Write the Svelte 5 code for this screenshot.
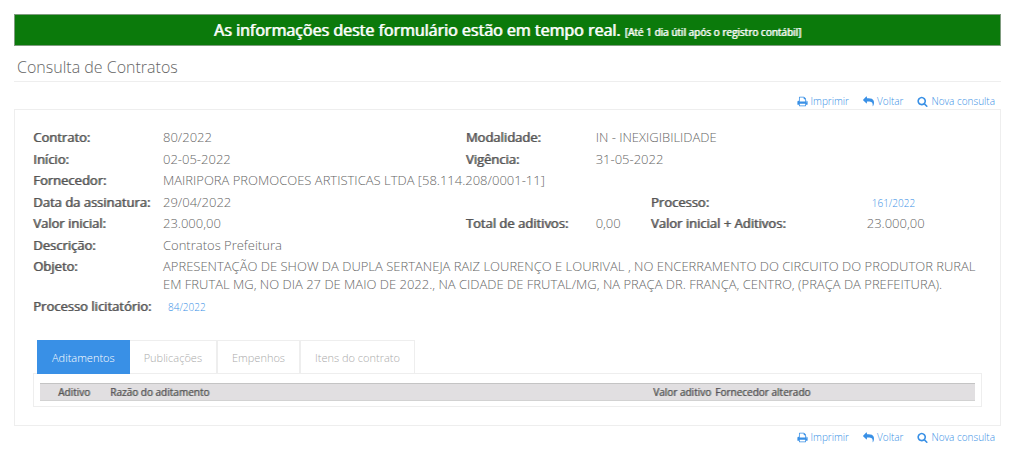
<script>
  const tabs = ['Aditamentos', 'Publicações', 'Empenhos', 'Itens do contrato'];
  let active = $state(0);

  const icons = {
    print: 'M448 1536h896v-256h-896v256zm0-640h896v-384h-160q-40 0-68-28t-28-68v-160h-640v640zm1152 64q0-26-19-45t-45-19-45 19-19 45 19 45 45 19 45-19 19-45zm128 0v416q0 13-9.5 22.5t-22.5 9.5h-224v160q0 40-28 68t-68 28h-960q-40 0-68-28t-28-68v-160h-224q-13 0-22.5-9.5t-9.5-22.5v-416q0-79 56.5-135.5t135.5-56.5h64v-544q0-40 28-68t68-28h672q40 0 88 20t76 48l152 152q28 28 48 76t20 88v256h64q79 0 135.5 56.5t56.5 135.5z',
    reply: 'M1792 1120q0 166-127 451-3 7-10.5 24t-13.5 30-13 22q-12 17-28 17-15 0-23.5-10t-8.5-25q0-9 2.5-26.5t2.5-23.5q5-68 5-123 0-101-17.5-181t-48.5-138.5-80-101-105.5-69.5-133-42.5-154-21.5-175.5-6h-224v256q0 26-19 45t-45 19-45-19l-512-512q-19-19-19-45t19-45l512-512q19-19 45-19t45 19 19 45v256h224q713 0 875 403 53 134 53 333z',
    search: 'M1216 832q0-185-131.5-316.5t-316.5-131.5-316.5 131.5-131.5 316.5 131.5 316.5 316.5 131.5 316.5-131.5 131.5-316.5zm512 832q0 52-38 90t-90 38q-54 0-90-38l-343-342q-179 124-399 124-143 0-273.5-55.5t-225-150-150-225-55.5-273.5 55.5-273.5 150-225 225-150 273.5-55.5 273.5 55.5 225 150 150 225 55.5 273.5q0 220-124 399l343 343q37 37 37 90z'
  };
  const actions = [
    { icon: icons.print, label: 'Imprimir' },
    { icon: icons.reply, label: 'Voltar' },
    { icon: icons.search, label: 'Nova consulta' }
  ];
</script>

{#snippet actionBar()}
  <nav class="actions">
    {#each actions as action}
      <a href="#top">
        <svg viewBox="0 0 1792 1792" aria-hidden="true"><path d={action.icon} /></svg>
        <span>{action.label}</span>
      </a>
    {/each}
  </nav>
{/snippet}

<main id="top">
  <p class="banner">As informações deste formulário estão em tempo real. <small>[Até 1 dia útil após o registro contábil]</small></p>
  <h1>Consulta de Contratos</h1>
  {@render actionBar()}

  <section class="panel">
    <dl>
      <div class="row">
        <dt>Contrato:</dt><dd>80/2022</dd>
        <dt>Modalidade:</dt><dd class="rest">IN - INEXIGIBILIDADE</dd>
      </div>
      <div class="row">
        <dt>Início:</dt><dd>02-05-2022</dd>
        <dt>Vigência:</dt><dd class="rest">31-05-2022</dd>
      </div>
      <div class="row">
        <dt>Fornecedor:</dt><dd class="wide">MAIRIPORA PROMOCOES ARTISTICAS LTDA [58.114.208/0001-11]</dd>
      </div>
      <div class="row">
        <dt>Data da assinatura:</dt><dd>29/04/2022</dd>
        <dt class="third">Processo:</dt><dd><a class="ref" href="#processo">161/2022</a></dd>
      </div>
      <div class="row">
        <dt>Valor inicial:</dt><dd>23.000,00</dd>
        <dt>Total de aditivos:</dt><dd>0,00</dd>
        <dt>Valor inicial + Aditivos:</dt><dd>23.000,00</dd>
      </div>
      <div class="row">
        <dt>Descrição:</dt><dd class="wide">Contratos Prefeitura</dd>
      </div>
      <div class="row">
        <dt>Objeto:</dt>
        <dd class="wide">APRESENTAÇÃO DE SHOW DA DUPLA SERTANEJA RAIZ LOURENÇO E LOURIVAL , NO ENCERRAMENTO DO CIRCUITO DO PRODUTOR RURAL EM FRUTAL MG, NO DIA 27 DE MAIO DE 2022., NA CIDADE DE FRUTAL/MG, NA PRAÇA DR. FRANÇA, CENTRO, (PRAÇA DA PREFEITURA).</dd>
      </div>
      <div class="row">
        <dt>Processo licitatório:</dt><dd class="wide"><a class="ref" href="#licitatorio">84/2022</a></dd>
      </div>
    </dl>

    <div class="tabs" role="tablist">
      {#each tabs as tab, i}
        <button type="button" role="tab" aria-selected={active === i} class:active={active === i} onclick={() => (active = i)}>{tab}</button>
      {/each}
    </div>
    <div class="tabpanel" role="tabpanel">
      <table>
        <thead>
          <tr>
            <th class="num">Aditivo</th>
            <th>Razão do aditamento</th>
            <th class="value">Valor aditivo</th>
            <th class="supplier">Fornecedor alterado</th>
          </tr>
        </thead>
      </table>
    </div>
  </section>
  {@render actionBar()}
</main>

<style>
  :global(body) {
    background: #fff;
  }
  main {
    padding: 14px 23px 0 14px;
    font: 300 13px/18px 'Open Sans', sans-serif;
    color: #666;
  }
  .banner {
    margin: 0;
    border: 1px solid #7f9c7f;
    background: #0b7a0b;
    color: #fff;
    text-align: center;
    font-size: 16px;
    font-weight: 400;
    line-height: 30px;
    text-shadow: 1px 0 0 rgb(255 255 255 / 85%);
  }
  .banner small {
    font-size: 10px;
    line-height: 16px;
  }
  h1 {
    margin: 8px 0 0;
    padding: 0 3px;
    border-bottom: 1px solid #eee;
    font-size: 16px;
    font-weight: 300;
    line-height: 27px;
    color: #666;
  }
  .actions {
    display: flex;
    justify-content: flex-end;
    gap: 14px;
    padding: 0 6px;
    font-size: 10px;
    line-height: 22px;
  }
  h1 + .actions {
    margin: 8px 0 -3px;
  }
  a {
    color: #3990e6;
    text-decoration: none;
  }
  .actions a {
    display: flex;
    align-items: center;
    gap: 3px;
  }
  svg {
    width: 11px;
    height: 11px;
    fill: #3990e6;
  }
  .panel {
    border: 1px solid #eee;
    padding: 18px;
  }
  dl {
    margin: 0;
  }
  .row {
    display: grid;
    grid-template-columns: 130px 302fr 130px 55fr 216px 115fr;
    padding-bottom: 4px;
  }
  .row:nth-child(even) {
    padding-bottom: 3px;
  }
  dt {
    font-weight: 400;
    color: #555;
    text-shadow: 1px 0 0 rgb(85 85 85 / 75%);
    white-space: nowrap;
  }
  dd {
    margin: 0;
  }
  .third {
    grid-column: 5;
  }
  .rest {
    grid-column: 4 / -1;
  }
  .wide {
    grid-column: 2 / -1;
  }
  .ref {
    padding: 0 5px;
    font-size: 10px;
    line-height: 12px;
  }
  .tabs {
    display: flex;
    align-items: flex-start;
    margin-top: 22px;
    padding-left: 4px;
  }
  button {
    box-sizing: border-box;
    height: 33px;
    margin: 0;
    padding: 0 14px;
    border: 1px solid #eee;
    border-bottom: 0;
    background: #fff;
    font: 300 11px/31px 'Open Sans', sans-serif;
    color: #aaa;
  }
  button.active {
    position: relative;
    height: 34px;
    margin: 0 -1px -1px 0;
    border-color: #3990e6;
    background: #3990e6;
    color: #fff;
  }
  .tabpanel {
    border: 1px solid #eee;
    padding: 9px 6px 5px;
  }
  table {
    width: 100%;
    border-collapse: collapse;
    table-layout: fixed;
    background: #e1dfe1;
    border-top: 1px solid #c4c4c4;
    border-bottom: 1px solid #d2d2d2;
  }
  th {
    box-sizing: border-box;
    padding: 0 4px 0 0;
    font-size: 10px;
    font-weight: 400;
    line-height: 16px;
    text-align: left;
    color: #555;
    text-shadow: 1px 0 0 rgb(85 85 85 / 60%);
  }
  .num {
    width: 70px;
    padding-left: 18px;
  }
  .value {
    width: 80px;
    text-align: right;
  }
  .supplier {
    width: 260px;
  }
</style>
